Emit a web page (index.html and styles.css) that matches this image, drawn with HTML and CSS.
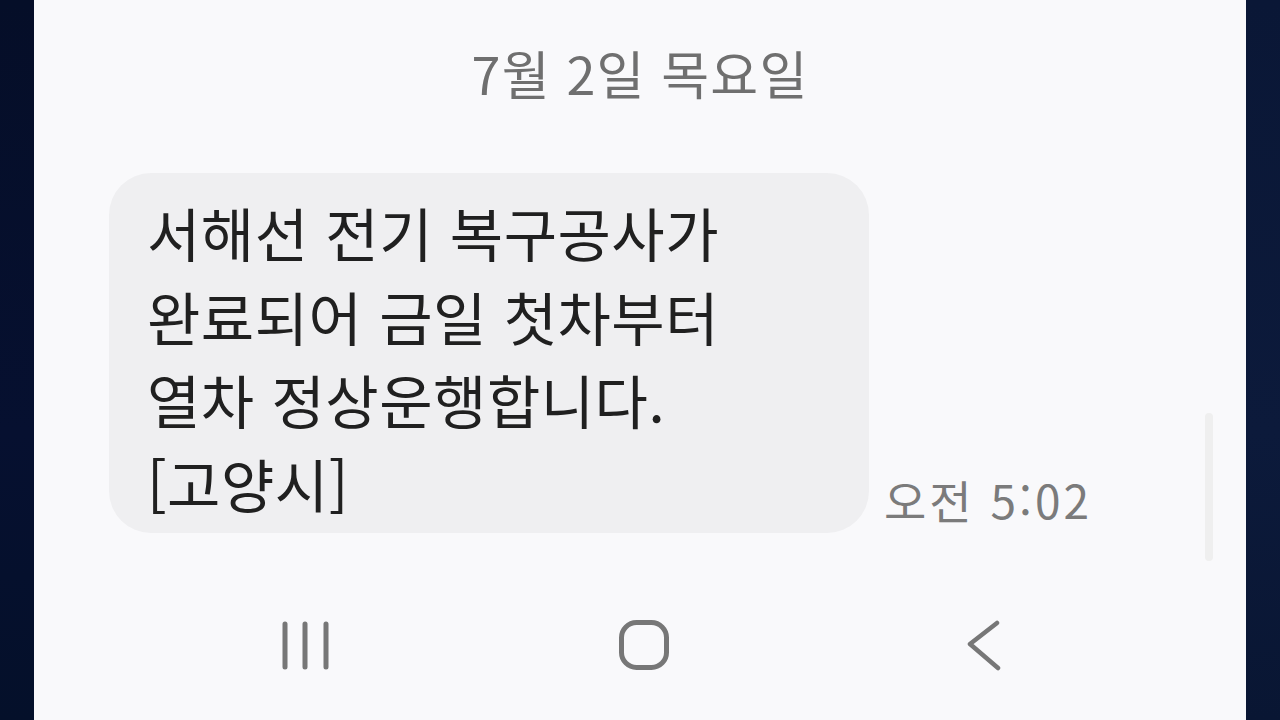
FILE: index.html
```html
<!DOCTYPE html>
<html lang="ko">
<head>
<meta charset="utf-8">
<meta name="viewport" content="width=device-width, initial-scale=1">
<link rel="stylesheet" href="styles.css">
</head>
<body>
    <div class="frame">
        <div class="edge left"></div>
        <div class="screen">
            <div class="date">7월 2일 목요일</div>
            <div class="msg-row">
                <div class="bubble">서해선 전기 복구공사가<br>완료되어 금일 첫차부터<br>열차 정상운행합니다.<br>[고양시]</div>
                <div class="time">오전 5:02</div>
            </div>
            <div class="scrollbar"></div>
            <div class="navbar">
                <svg class="nav-recent" width="50" height="52" viewBox="0 0 50 52">
                    <path d="M5 5 V48 M25 5 V48 M46 5 V48" fill="none" stroke="#777" stroke-width="5" stroke-linecap="round"/>
                </svg>
                <svg class="nav-home" width="56" height="56" viewBox="0 0 56 56">
                    <rect x="5.5" y="5.5" width="45" height="45" rx="15" fill="none" stroke="#777" stroke-width="5"/>
                </svg>
                <svg class="nav-back" width="40" height="52" viewBox="0 0 40 52">
                    <path d="M33 4 L6 25 L34 49" fill="none" stroke="#777" stroke-width="4.5" stroke-linecap="round" stroke-linejoin="round"/>
                </svg>
            </div>
        </div>
        <div class="edge right"></div>
    </div>
</body>
</html>
```

FILE: styles.css
```css
* {
    box-sizing: border-box;
}
html, body {
    margin: 0;
    height: 100%;
}
body {
    background-color: #07112c;
    font-family: "Noto Sans CJK KR", "Noto Sans", sans-serif;
    overflow: hidden;
}
/* Dark surround on both sides of the phone */
.frame {
    display: flex;
    height: 720px;
}
.edge {
    width: 34px;
    flex: none;
}
.edge.left {
    background: linear-gradient(180deg, #050e28, #061030 60%, #04102a);
}
.edge.right {
    background: linear-gradient(180deg, #0a1736, #0c1a3b 60%, #091633);
}
/* The phone screen */
.screen {
    position: relative;
    flex: 1;
    background-color: #f9f9fb;
    display: flex;
    flex-direction: column;
}
.date {
    padding-top: 43px;
    height: 103px;
    line-height: 60px;
    text-align: center;
    font-size: 52px;
    color: #6f6f6f;
    letter-spacing: 1.2px;
}
/* Message bubble with time beside it */
.msg-row {
    display: flex;
    align-items: flex-end;
    margin-top: 70px;
    padding-left: 75px;
}
.bubble {
    width: 760px;
    padding: 18px 30px 8px 38px;
    background-color: #efeff1;
    border-radius: 42px;
    font-size: 58px;
    line-height: 83.5px;
    color: #202020;
    letter-spacing: 0.5px;
}
.time {
    margin-left: 15px;
    margin-bottom: 6px;
    font-size: 46px;
    line-height: 56px;
    color: #7b7b7b;
    letter-spacing: 3px;
}
/* Scroll indicator on the right */
.scrollbar {
    position: absolute;
    left: 1171px;
    top: 413px;
    width: 8px;
    height: 148px;
    border-radius: 4px;
    background-color: #efefef;
}
/* Bottom navigation bar */
.navbar {
    display: flex;
    align-items: center;
    margin-top: 82px;
    padding-left: 246px;
    height: 60px;
}
.nav-home {
    margin-left: 286px;
}
.nav-back {
    margin-left: 292px;
}
```
